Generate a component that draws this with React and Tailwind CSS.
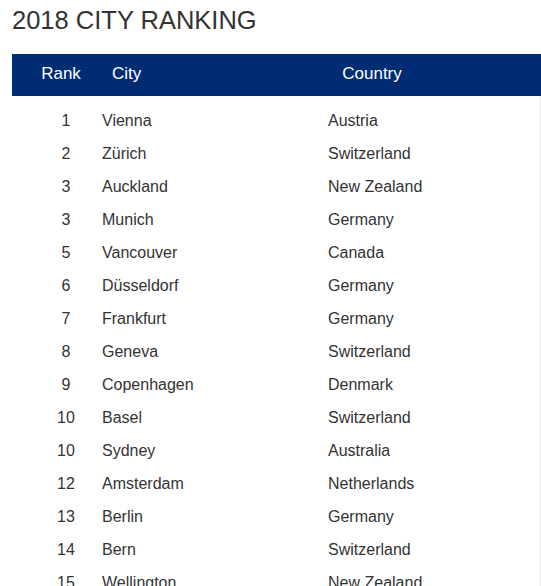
const rows = [
  [1, 'Vienna', 'Austria'],
  [2, 'Zürich', 'Switzerland'],
  [3, 'Auckland', 'New Zealand'],
  [3, 'Munich', 'Germany'],
  [5, 'Vancouver', 'Canada'],
  [6, 'Düsseldorf', 'Germany'],
  [7, 'Frankfurt', 'Germany'],
  [8, 'Geneva', 'Switzerland'],
  [9, 'Copenhagen', 'Denmark'],
  [10, 'Basel', 'Switzerland'],
  [10, 'Sydney', 'Australia'],
  [12, 'Amsterdam', 'Netherlands'],
  [13, 'Berlin', 'Germany'],
  [14, 'Bern', 'Switzerland'],
  [15, 'Wellington', 'New Zealand'],
  [16, 'Toronto', 'Canada'],
]

export default function App() {
  return (
    <div className="h-[586px] overflow-hidden bg-white pl-[12px] font-['Liberation_Sans',Arial,sans-serif] text-[#333]">
      <h1 className="mt-[5px] mb-[19px] text-[25.5px] leading-[30px] font-normal text-[#333]">
        2018 CITY RANKING
      </h1>

      <div className="flex h-[42px] items-center bg-[#002c73] pb-[2px] text-[17px] text-white">
        <div className="w-[98px] text-center">Rank</div>
        <div className="w-[170px] pl-[2px]">City</div>
        <div className="w-[184px] text-center">Country</div>
      </div>

      <div className="border-r border-[#ececec] pt-[8px] text-[16px]">
        {rows.map(([rank, city, country], i) => (
          <div key={i} className="flex h-[33px] items-center">
            <div className="w-[90px] pl-[36px]">
              <span className="inline-block w-[36px] text-center">{rank}</span>
            </div>
            <div className="w-[226px]">{city}</div>
            <div>{country}</div>
          </div>
        ))}
      </div>
    </div>
  )
}
